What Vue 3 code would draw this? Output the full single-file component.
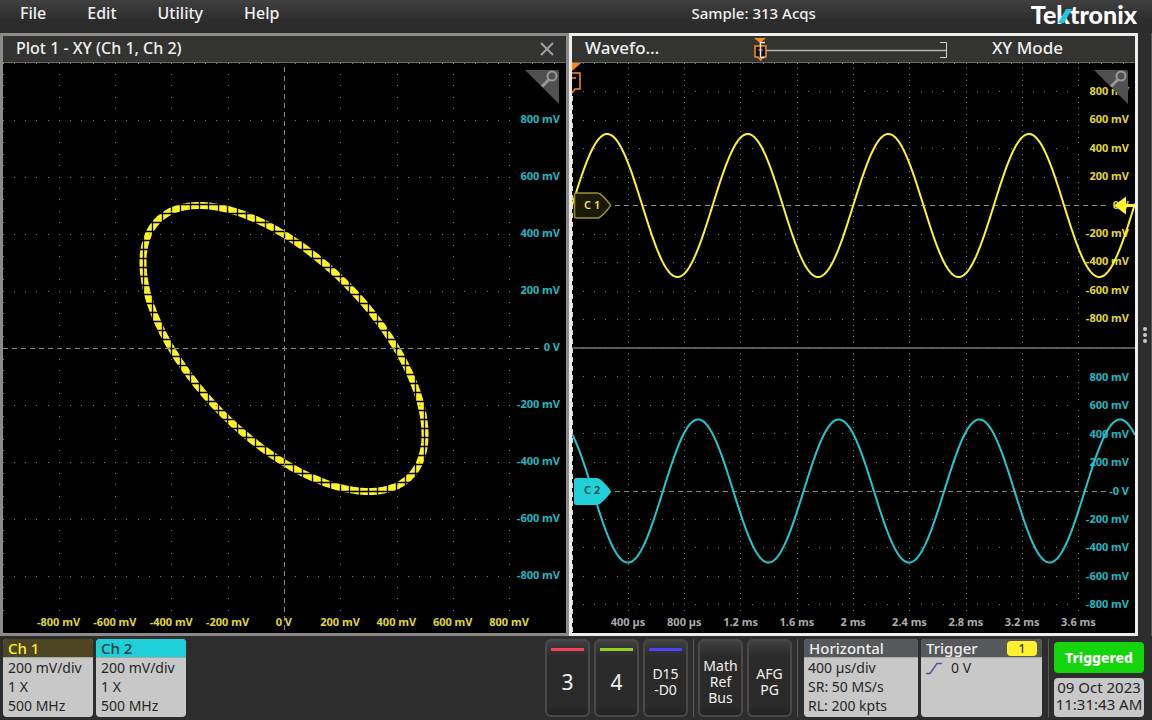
<script setup>
const menus = ['File', 'Edit', 'Utility', 'Help']

// XY plot: 563 x 570 units, 10 x 10 divisions
const W = 563
const H = 570
const dx = W / 10
const dy = H / 10
const volts = [800, 600, 400, 200, 0, -200, -400, -600, -800]
const mv = (v) => (v === 0 ? '0 V' : `${v} mV`)

const dot = (x, y) => `M${Math.floor(x)} ${Math.floor(y)}h1v1h-1z`

function xyDots() {
  let d = ''
  for (let r = 0; r < 10; r++) {
    if (r === 5) continue
    for (let k = 0; k <= (r ? 45 : 49); k++) {
      if (k !== 25) d += dot((k * dx) / 5, r * dy)
    }
  }
  for (let c = 0; c < 10; c++) {
    if (c === 5) continue
    for (let k = 1; k <= 48; k++) {
      if (k % 5) d += dot(c * dx, (k * dy) / 5)
    }
  }
  return d
}

function waveDots() {
  let d = ''
  for (let r = 0; r < 20; r++) {
    if (r === 5 || r === 15) continue
    const last = r === 0 || r === 10 ? 49 : 44
    for (let k = 1; k <= last; k++) d += dot((k * dx) / 5, (r * dy) / 2)
  }
  for (let c = 1; c < 10; c++) {
    for (let k = 1; k <= 96; k++) {
      if (k % 5) d += dot(c * dx, (k * dy) / 10)
    }
  }
  return d
}

const phase = (233 * Math.PI) / 180

function lissajous() {
  let d = ''
  for (let i = 0; i < 360; i++) {
    const t = (i * Math.PI) / 180
    const x = 281 + 141 * Math.sin(t)
    const y = 285.5 - 143 * Math.sin(t - phase)
    d += `${i ? 'L' : 'M'}${x.toFixed(1)} ${y.toFixed(1)}`
  }
  return d + 'z'
}

function lissajousGaps() {
  let d = ''
  for (let k = -16; k <= 16; k++) {
    d += `M${Math.floor(281 + k * 9.38)}.5 130V440`
    d += `M130 ${Math.floor(285 + k * 8.95)}.5H430`
  }
  return d
}

function sine(center, amplitude, shift) {
  let d = ''
  for (let x = 0; x <= W; x++) {
    const y = center - amplitude * Math.sin((2 * Math.PI * x) / 140.6 - shift)
    d += `${x ? 'L' : 'M'}${x} ${y.toFixed(1)}`
  }
  return d
}

const xyGrid = xyDots()
const waveGrid = waveDots()
const xyTrace = lissajous()
const xyGaps = lissajousGaps()
const ch1Trace = sine(142.5, 71.5, 0)
const ch2Trace = sine(428, 71.5, phase)

const times = ['400 µs', '800 µs', '1.2 ms', '1.6 ms', '2 ms', '2.4 ms', '2.8 ms', '3.2 ms', '3.6 ms']

const channels = [
  { name: 'Ch 1', cls: 'one' },
  { name: 'Ch 2', cls: 'two' },
]
const inactive = [
  { label: '3', cls: 'red big' },
  { label: '4', cls: 'green big' },
  { label: 'D15\n-D0', cls: 'blue' },
]
const adders = ['Math\nRef\nBus', 'AFG\nPG']
</script>

<template>
  <div class="scope">
    <header class="top">
      <nav class="menu">
        <button v-for="m in menus" :key="m" type="button">{{ m }}</button>
      </nav>
      <div class="acq">Sample: 313 Acqs</div>
      <div class="logo">
        Tektronix
        <svg class="slash" width="14" height="15" viewBox="0 0 14 15" aria-hidden="true">
          <path d="M8 0h6L6 14H0z" fill="#1fc4e8" />
        </svg>
      </div>
    </header>

    <main class="views">
      <section class="panel">
        <div class="title">
          <h2>Plot 1 - XY (Ch 1, Ch 2)</h2>
          <button type="button" class="close" aria-label="Close">
            <svg width="14" height="14" viewBox="0 0 14 14"><path d="M1 1l12 12M13 1L1 13" stroke="#a0a0a4" stroke-width="2" /></svg>
          </button>
        </div>
        <svg class="plot" viewBox="0 0 563 570">
          <path :d="xyTrace" class="yellow-line thick" />
          <path :d="xyGaps" stroke="#000" stroke-width="1.300" fill="none" />
          <path :d="xyGrid" fill="#808080" />
          <path d="M281.500 4V570" class="axis" />
          <path d="M0 285.500H538" class="axis" />
          <g class="cyan end">
            <text v-for="(v, i) in volts" :key="v" x="557" :y="60 + i * 57">{{ mv(v) }}</text>
          </g>
          <g class="yellow mid">
            <text v-for="(v, i) in volts" :key="v" :x="506 - i * 56.3" y="563">{{ mv(v) }}</text>
          </g>
          <g>
            <path d="M522 7h32a2 2 0 0 1 2 2v32z" fill="#505050" />
            <circle cx="549" cy="13" r="4.500" fill="none" stroke="#999" stroke-width="2" />
            <path d="M546 16.500l-7 7" stroke="#999" stroke-width="3" />
          </g>
        </svg>
      </section>

      <section class="panel active">
        <div class="title">
          <h2>Wavefo…</h2>
          <svg class="record" viewBox="0 0 200 25" width="200" height="25">
            <path d="M10 13.500H197" stroke="#b4b4b4" stroke-width="1.500" />
            <path d="M190 5.500h6.500v15h-6.500" fill="none" stroke="#d0d0d0" />
            <path d="M4 1h12l-6 5z" fill="#ff8a1c" />
            <path d="M5 9h11v11h-3l-2.500 3l-2.500-3h-3z" fill="#111" stroke="#ff8a1c" stroke-width="1.500" />
            <path d="M8 13h5" stroke="#ff8a1c" />
            <path d="M15 5.500h-4.500v15h4" fill="none" stroke="#e8e8e8" stroke-width="1.500" />
          </svg>
          <h2>XY Mode</h2>
        </div>
        <svg class="plot" viewBox="0 0 563 570">
          <path :d="waveGrid" fill="#808080" />
          <path d="M0.500 33V570" class="axis edge" />
          <path d="M43 142.500H538M43 428.500H538" class="axis" />
          <path d="M0 285H563" stroke="#777" stroke-width="1.500" />
          <g class="yellow end">
            <text v-for="(v, i) in volts" :key="v" x="557" :y="32 + i * 28.4">{{ mv(v) }}</text>
          </g>
          <g class="cyan end">
            <text v-for="(v, i) in volts" :key="v" x="557" :y="318 + i * 28.4">{{ v ? mv(v) : '-0 V' }}</text>
          </g>
          <g class="gray mid">
            <text v-for="(t, i) in times" :key="t" :x="56 + i * 56.3" y="563">{{ t }}</text>
          </g>
          <path :d="ch1Trace" class="yellow-line" />
          <path :d="ch2Trace" class="cyan-line" />
          <g>
            <path d="M4.500 130h21c4 0 13 12 13 12.500s-9 12.500-13 12.500h-21a2 2 0 0 1-2-2v-21a2 2 0 0 1 2-2z" fill="#1b1905" stroke="#9c9430" stroke-width="1.500" />
            <text x="12" y="146" class="tag" fill="#efe542">C 1</text>
            <path d="M4 415h21c4 0 14 12 14 13.500s-10 13.500-14 13.500h-21a2 2 0 0 1-2-2v-23a2 2 0 0 1 2-2z" fill="#20d0d8" />
            <text x="12" y="431" class="tag" fill="#073f44">C 2</text>
          </g>
          <path d="M542 142.500l12-9v7.500h9v3h-9v7.500z" fill="#fff530" />
          <g>
            <path d="M0 0h9L0 8z" fill="#ff8a1c" />
            <path d="M0 10h8v16h-5l-3 4M0 15h4" fill="none" stroke="#ff8a1c" stroke-width="1.500" />
          </g>
          <g>
            <path d="M522 7h32a2 2 0 0 1 2 2v32z" fill="#505050" />
            <circle cx="549" cy="13" r="4.500" fill="none" stroke="#999" stroke-width="2" />
            <path d="M546 16.500l-7 7" stroke="#999" stroke-width="3" />
          </g>
        </svg>
      </section>
      <button type="button" class="drawer" aria-label="Show results bar"><i></i><i></i><i></i></button>
    </main>

    <footer class="bottom">
      <button v-for="c in channels" :key="c.name" type="button" class="badge channel" :class="c.cls">
        <span class="head">{{ c.name }}</span>
        <span class="body"><span>200 mV/div</span><span>1 X</span><span>500 MHz</span></span>
      </button>
      <div class="keys">
        <button v-for="k in inactive" :key="k.label" type="button" class="key lit" :class="k.cls">{{ k.label }}</button>
        <span class="rule"></span>
        <button v-for="a in adders" :key="a" type="button" class="key">{{ a }}</button>
        <span class="rule"></span>
      </div>
      <button type="button" class="badge horizontal">
        <span class="head">Horizontal</span>
        <span class="body"><span>400 µs/div</span><span>SR: 50 MS/s</span><span>RL: 200 kpts</span></span>
      </button>
      <button type="button" class="badge trigger">
        <span class="head">Trigger <b>1</b></span>
        <span class="body">
          <span class="level">
            <svg width="18" height="14" viewBox="0 0 18 14"><path d="M1 12.500h4l7-10h5" fill="none" stroke="#56568e" stroke-width="1.500" /></svg>
            0 V
          </span>
        </span>
      </button>
      <span class="rule last"></span>
      <div class="status">
        <div class="state">Triggered</div>
        <div class="date">09 Oct 2023<br />11:31:43 AM</div>
      </div>
    </footer>
  </div>
</template>

<style>
body {
  margin: 0;
  background: #2d2d2d;
}
</style>

<style scoped>
.scope {
  display: flex;
  flex-direction: column;
  height: 100vh;
  overflow: hidden;
  background: #2d2d2d;
  color: #f0f0f0;
  font-family: "Noto Sans", "Open Sans", sans-serif;
  font-size: 14px;
}
button {
  margin: 0;
  padding: 0;
  border: 0;
  background: none;
  color: inherit;
  font: inherit;
}
.top {
  display: flex;
  align-items: flex-start;
  height: 33px;
  padding-right: 15px;
  background: linear-gradient(#404040, #2c2c2c 20px);
  font-size: 15px;
  font-weight: 500;
  line-height: 26px;
}
.menu {
  display: flex;
  flex: 1;
  gap: 41px;
  padding-left: 20px;
  font-size: 16px;
}
.logo {
  position: relative;
  margin-left: 215px;
  color: #fff;
  font-family: Lato, sans-serif;
  font-size: 25px;
  font-weight: 900;
  line-height: 28px;
}
.slash {
  position: absolute;
  left: 27px;
  top: 9px;
}
.views {
  display: flex;
  flex: 1;
  min-height: 0;
}
.panel {
  display: flex;
  flex: 1;
  flex-direction: column;
  min-width: 0;
  box-sizing: border-box;
  border: 3px solid #8f8a8a;
}
.active {
  border-color: #ededed;
}
.title {
  display: flex;
  align-items: center;
  height: 26px;
  padding: 0 12px 0 13px;
  border-bottom: 1px solid #686868;
  background: #333332;
}
h2 {
  margin: 0;
  font-size: 16px;
  font-weight: 500;
  line-height: 24px;
  padding-bottom: 2px;
  white-space: nowrap;
}
.active h2 {
  font-size: 17px;
}
.close {
  display: flex;
  margin-left: auto;
}
.record {
  margin: 0 auto 0 91px;
}
.active .title {
  padding-right: 72px;
}
.plot {
  flex: 1;
  width: 100%;
  min-height: 0;
  background: #000;
}
.plot text {
  font-size: 11px;
  font-weight: 700;
}
.plot .tag {
  font-weight: 600;
}
.end text {
  text-anchor: end;
}
.mid text {
  text-anchor: middle;
}
.cyan {
  fill: #20b8c0;
}
.yellow {
  fill: #e0d830;
}
.gray {
  fill: #acacac;
}
.axis {
  fill: none;
  stroke: #8c8c8c;
  stroke-dasharray: 5 4;
}
.edge {
  stroke: #d8d8d8;
}
.yellow-line {
  fill: none;
  stroke: #fff524;
  stroke-width: 2;
}
.thick {
  stroke-width: 7;
}
.cyan-line {
  fill: none;
  stroke: #20c8d0;
  stroke-width: 2;
}
.drawer {
  display: flex;
  flex-direction: column;
  align-items: center;
  justify-content: center;
  gap: 2px;
  box-sizing: border-box;
  width: 14px;
  border-right: 1px solid #555;
}
.drawer i {
  width: 4px;
  height: 4px;
  border-radius: 2px;
  background: #c8c8c8;
}
.bottom {
  display: flex;
  height: 84px;
  box-sizing: border-box;
  padding: 3px 8px 3px 3px;
  gap: 3px;
}
.badge {
  display: flex;
  flex-direction: column;
  width: 90px;
  border-radius: 4px;
  background: #c8c8c8;
  color: #262626;
  text-align: left;
}
.head {
  display: flex;
  align-self: stretch;
  justify-content: space-between;
  padding: 0 5px;
  border-radius: 4px 4px 0 0;
  background: #57585a;
  color: #eee;
  font-size: 15px;
  font-weight: 500;
  line-height: 18px;
  border-bottom: 1px solid #a8a8a8;
}
.one .head {
  background: #4c4722;
  color: #fff130;
}
.two .head {
  background: #20d0d8;
  color: #10393b;
}
.body {
  display: flex;
  flex-direction: column;
  padding: 0 4px;
  line-height: 19px;
}
.channel .body {
  padding: 0 5px;
}
.keys {
  display: flex;
  flex: 1;
  justify-content: flex-end;
  gap: 4px;
  padding-right: 3px;
}
.key {
  position: relative;
  box-sizing: border-box;
  width: 45px;
  padding-top: 8px;
  border: 2px solid #4d4845;
  border-radius: 6px;
  background: linear-gradient(#3e4041, #2a2a2a 16px, #2a2a2a 66px, #222);
  line-height: 16px;
  text-align: center;
  white-space: pre-line;
}
.big {
  font-size: 21px;
}
.lit::before {
  position: absolute;
  top: 7px;
  left: 4px;
  right: 4px;
  height: 3px;
  content: "";
}
.red::before {
  background: #f8405c;
}
.green::before {
  background: #94d020;
}
.blue::before {
  background: #5040f8;
}
.rule {
  width: 1px;
  margin-left: 1px;
  background: #5d5855;
}
.last {
  margin: 0 2px 0 3px;
}
.horizontal {
  width: 114px;
}
.trigger {
  width: 121px;
}
.trigger b {
  width: 30px;
  height: 15px;
  margin-top: 2px;
  border-radius: 4px;
  background: #fff130;
  color: #333;
  font-size: 12px;
  font-weight: 500;
  line-height: 15px;
  text-align: center;
}
.level {
  display: flex;
  align-items: center;
  gap: 8px;
}
.status {
  display: flex;
  flex-direction: column;
  gap: 5px;
  width: 90px;
  padding-top: 3px;
  text-align: center;
}
.state {
  border-radius: 4px;
  background: #14d40c;
  color: #fff;
  font-weight: 800;
  line-height: 31px;
}
.date {
  flex: 1;
  padding-top: 1px;
  border-radius: 4px;
  background: #c8c8c8;
  color: #262626;
  font-size: 15px;
  line-height: 17px;
  white-space: nowrap;
}
</style>
